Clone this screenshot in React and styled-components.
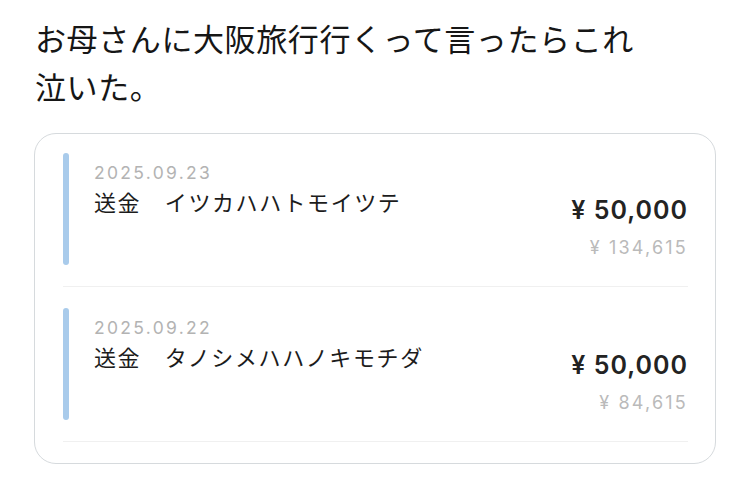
import styled, { createGlobalStyle } from 'styled-components'

const GlobalStyle = createGlobalStyle`
  body {
    margin: 0;
    background: #fff;
    font-family: Inter, "Noto Sans CJK JP", sans-serif;
    color: #1a1a1a;
  }
`

const Page = styled.div`
  padding: 14px 0 0 35px;
`

const Caption = styled.p`
  margin: 0;
  width: 620px;
  font-family: "Noto Sans CJK JP", sans-serif;
  font-size: 31px;
  line-height: 48px;
  letter-spacing: 0.6px;
  color: #161616;
`

const Card = styled.div`
  box-sizing: border-box;
  margin: 23px 0 0 -1px;
  width: 682px;
  height: 331px;
  padding: 0 27px 0 28px;
  border: 1.5px solid #d6dadd;
  border-radius: 22px;
  overflow: hidden;
  background: #fff;
`

const Item = styled.div`
  display: flex;
  padding: 21px 0;
  border-bottom: 1px solid #f0f0f0;
  &:first-child {
    padding-top: 19px;
  }
`

const Bar = styled.div`
  flex: none;
  width: 6px;
  height: 112px;
  border-radius: 3px;
  background: ${props => props.color || '#a9cbeb'};
`

const Body = styled.div`
  flex: 1;
  margin-left: 25px;
  padding-top: 10px;
`

const Date = styled.div`
  font-size: 17.5px;
  line-height: 20px;
  letter-spacing: 2.3px;
  color: #b3b3b3;
`

const Row = styled.div`
  display: flex;
  justify-content: space-between;
  align-items: flex-start;
  margin-top: 4px;
`

const Name = styled.div`
  font-family: "Noto Sans CJK JP", sans-serif;
  font-size: 22px;
  line-height: 28px;
  letter-spacing: 1.6px;
  color: #1c1c1c;
  white-space: pre;
`

const Amount = styled.div`
  margin-top: 8px;
  font-size: 25px;
  line-height: 30px;
  font-weight: 600;
  letter-spacing: 1px;
  color: #232323;
`

const Balance = styled.div`
  margin-top: 12px;
  text-align: right;
  font-size: 18px;
  line-height: 22px;
  letter-spacing: 2.2px;
  color: #bababa;
`

const items = [
  { date: '2025.09.23', name: '送金　イツカハハトモイツテ', amount: '¥ 50,000', balance: '¥ 134,615' },
  { date: '2025.09.22', name: '送金　タノシメハハノキモチダ', amount: '¥ 50,000', balance: '¥ 84,615' },
  { color: '#f2b8c6' },
]

export default function App() {
  return (
    <Page>
      <GlobalStyle />
      <Caption>お母さんに大阪旅行行くって言ったらこれ泣いた。</Caption>
      <Card>
        {items.map((it, i) => (
          <Item key={i}>
            <Bar color={it.color} />
            {it.date && (
              <Body>
                <Date>{it.date}</Date>
                <Row>
                  <Name>{it.name}</Name>
                  <Amount>{it.amount}</Amount>
                </Row>
                <Balance>{it.balance}</Balance>
              </Body>
            )}
          </Item>
        ))}
      </Card>
    </Page>
  )
}
